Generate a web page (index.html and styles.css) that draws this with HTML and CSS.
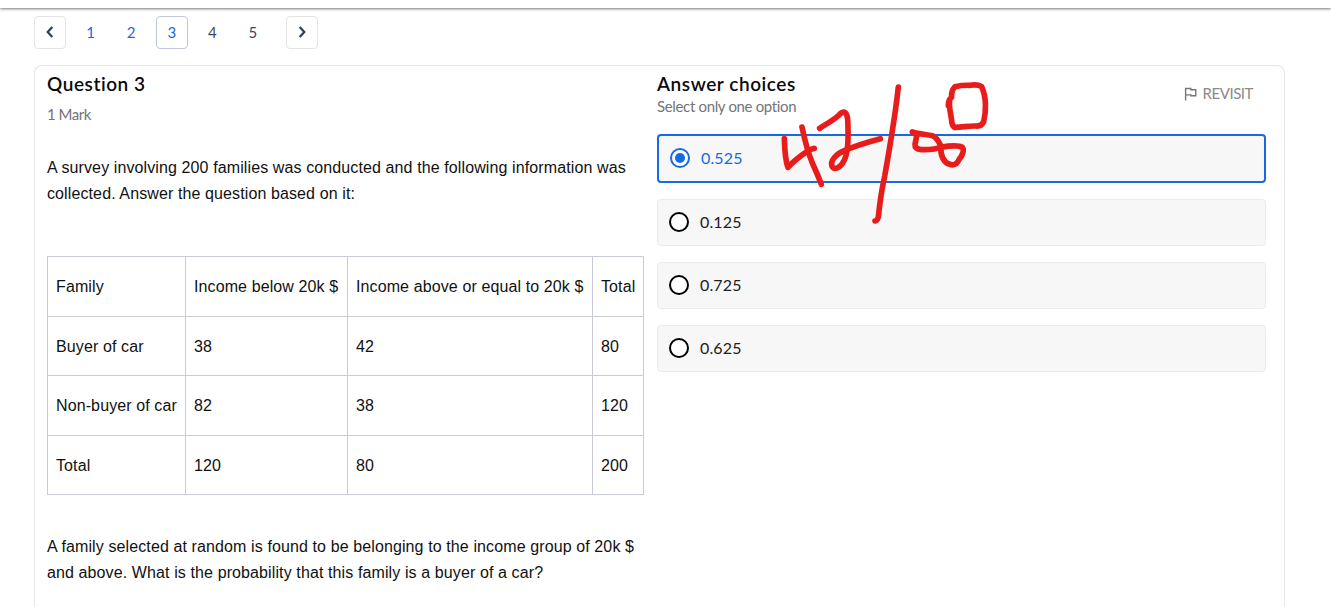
FILE: index.html
```html
<!DOCTYPE html>
<html lang="en">
<head>
<meta charset="utf-8">
<title>Question 3</title>
<link rel="stylesheet" href="styles.css">
</head>
<body>
<header class="topbar"></header>
<nav class="pager">
  <button class="page arrow" aria-label="Previous"><svg width="10" height="14" viewBox="0 0 10 14"><path d="M7.3 2 2.7 7l4.6 5"/></svg></button>
  <button class="page visited">1</button>
  <button class="page visited">2</button>
  <button class="page visited current">3</button>
  <button class="page">4</button>
  <button class="page">5</button>
  <button class="page arrow next" aria-label="Next"><svg width="10" height="14" viewBox="0 0 10 14"><path d="m2.7 2 4.6 5-4.6 5"/></svg></button>
</nav>
<main class="card">
  <section class="question">
    <h1 class="title">Question 3</h1>
    <p class="mark">1 Mark</p>
    <p class="prose intro">A survey involving 200 families was conducted and the following information was<br>collected. Answer the question based on it:</p>
    <table class="data">
      <tr class="head"><td class="c1">Family</td><td class="c2">Income below 20k $</td><td class="c3">Income above or equal to 20k $</td><td class="c4">Total</td></tr>
      <tr class="short"><td>Buyer of car</td><td>38</td><td>42</td><td>80</td></tr>
      <tr><td>Non-buyer of car</td><td>82</td><td>38</td><td>120</td></tr>
      <tr class="short"><td>Total</td><td>120</td><td>80</td><td>200</td></tr>
    </table>
    <p class="prose">A family selected at random is found to be belonging to the income group of 20k $<br>and above. What is the probability that this family is a buyer of a car?</p>
  </section>
  <section class="answers">
    <div class="answers-head">
      <div>
        <h2 class="title">Answer choices</h2>
        <p class="hint">Select only one option</p>
      </div>
      <div class="revisit">
        <svg width="13" height="14" viewBox="0 0 13 14"><path d="M1.6 13.5V1.5h5.2v1.3h5v6H6.9V7.9H1.6"/></svg>
        <span>REVISIT</span>
      </div>
    </div>
    <div class="options">
      <label class="option selected"><span class="radio"></span><span class="value">0.525</span></label>
      <label class="option"><span class="radio"></span><span class="value">0.125</span></label>
      <label class="option"><span class="radio"></span><span class="value">0.725</span></label>
      <label class="option"><span class="radio"></span><span class="value">0.625</span></label>
    </div>
  </section>
</main>
<svg class="ink" width="230" height="155" viewBox="0 0 690 465">
  <path d="M43 191C44 225 46 257 54 277C70 259 97 239 115 227Q125 221 133 220"/>
  <path d="M96 156C106 205 116 237 127 264Q143 299 154 328"/>
  <path d="M149 160C170 145 197 134 212 115Q229 103 233 132C235 170 237 232 222 257C212 279 193 286 186 274C180 256 199 237 223 227C250 214 294 201 331 191"/>
  <path d="M385 36C376 120 358 225 344 304C333 352 329 387 325 426Q322 437 315 438"/>
  <path d="M427 171C448 178 470 178 487 182C503 188 508 204 514 216C509 240 522 262 537 267C555 274 563 264 568 252C577 242 584 225 577 217C565 209 535 213 514 216C495 225 475 224 455 224Q434 222 435 208L440 183"/>
  <path d="M535 92Q534 75 545 67Q543 48 555 35Q578 30 600 31Q622 27 635 35C649 66 649 108 641 140Q635 155 617 153C593 152 575 158 553 157Q545 151 545 136C541 110 536 93 539 75"/>
</svg>
</body>
</html>
```
FILE: styles.css
```css
* { box-sizing: border-box; }
html, body { height: 100%; overflow: hidden; }
body { margin: 0; background: #fff; color: #111; font-family: Lato, sans-serif; }
h1, h2, p { margin: 0; }

.topbar { height: 8px; background: #fff; box-shadow: 0 1px 3px #777; }

.pager { display: flex; gap: 8.6px; padding: 8px 34px 0; }
.page {
  width: 32px; height: 33px; padding: 0 0 2px; border: 1px solid transparent; border-radius: 4px;
  display: flex; align-items: center; justify-content: center;
  background: #fff; color: #3b4863; font: 15px Lato, sans-serif;
}
.page.visited { color: #1a69e5; }
.page.current { border-color: #c3c8d8; }
.page.arrow { padding: 0; border-color: #e4e4e4; }
.page.next { margin-left: 8px; }
.arrow svg { fill: none; stroke: #303d5c; stroke-width: 2.2; margin-bottom: 1px; }

.card {
  width: 1251px; height: 542px; margin: 16px 0 0 34px; padding: 0 18px 0 12px;
  display: grid; grid-template-columns: 597px 609px; column-gap: 13px;
  border: 1px solid #e6e6e6; border-bottom: 0; border-radius: 8px 8px 0 0;
}
.title { font-size: 19px; line-height: 24px; font-weight: 600; letter-spacing: 0.56px; color: #0a0a0a; }

.question { padding-top: 6px; }
.mark { margin-top: 7px; font-size: 15px; line-height: 22px; letter-spacing: -0.5px; color: #757575; }
.prose { font: 16px/26px "Liberation Sans", Arial, sans-serif; letter-spacing: 0.11px; white-space: nowrap; }
.intro { margin: 30px 0 49px; }
.data {
  width: 597px; margin-bottom: 39px; border-collapse: collapse; table-layout: fixed;
  font: 16px/26px "Liberation Sans", Arial, sans-serif; letter-spacing: 0.11px;
}
.data td { height: 60px; padding: 0 0 0 8px; border: 1px solid #c9ccd5; white-space: nowrap; }
.data .short td { height: 59px; padding-top: 1px; }
.c1 { width: 138px; }
.c2 { width: 162px; }
.c3 { width: 245px; }

.answers { padding-top: 6px; }
.answers-head { height: 62px; display: flex; justify-content: space-between; }
.hint { font-size: 15px; line-height: 20px; letter-spacing: -0.34px; color: #757575; }
.revisit { height: 20px; margin: 11px 13px 0 0; display: flex; align-items: center; gap: 6px; font-size: 15px; letter-spacing: -0.45px; color: #8a8a8a; }
.revisit svg { fill: none; stroke: #777; stroke-width: 1.4; margin-top: 2px; }

.options { display: grid; gap: 16px; }
.option {
  height: 47px; padding: 0 0 1px 11px; display: flex; align-items: center; gap: 11px;
  border: 1px solid #eaebee; border-radius: 4px; background: #f7f7f7;
  font-size: 16px; letter-spacing: 0.15px; color: #202020;
}
.value { padding-bottom: 1px; }
.radio {
  width: 20px; height: 20px; border: 2px solid #000; border-radius: 50%;
  display: grid; place-items: center; background: #fff;
}
.option.selected { height: 49px; border: 2px solid #1769e5; color: #1769e5; }
.selected .radio { border-color: #1769e5; }
.selected .radio::after { content: ""; width: 10px; height: 10px; border-radius: 50%; background: #1769e5; }

/* Freehand pen strokes drawn over the page */
.ink {
  position: absolute; left: 770px; top: 75px; pointer-events: none;
  fill: none; stroke: #e91c1c; stroke-width: 17; stroke-linecap: round; stroke-linejoin: round;
}
```
